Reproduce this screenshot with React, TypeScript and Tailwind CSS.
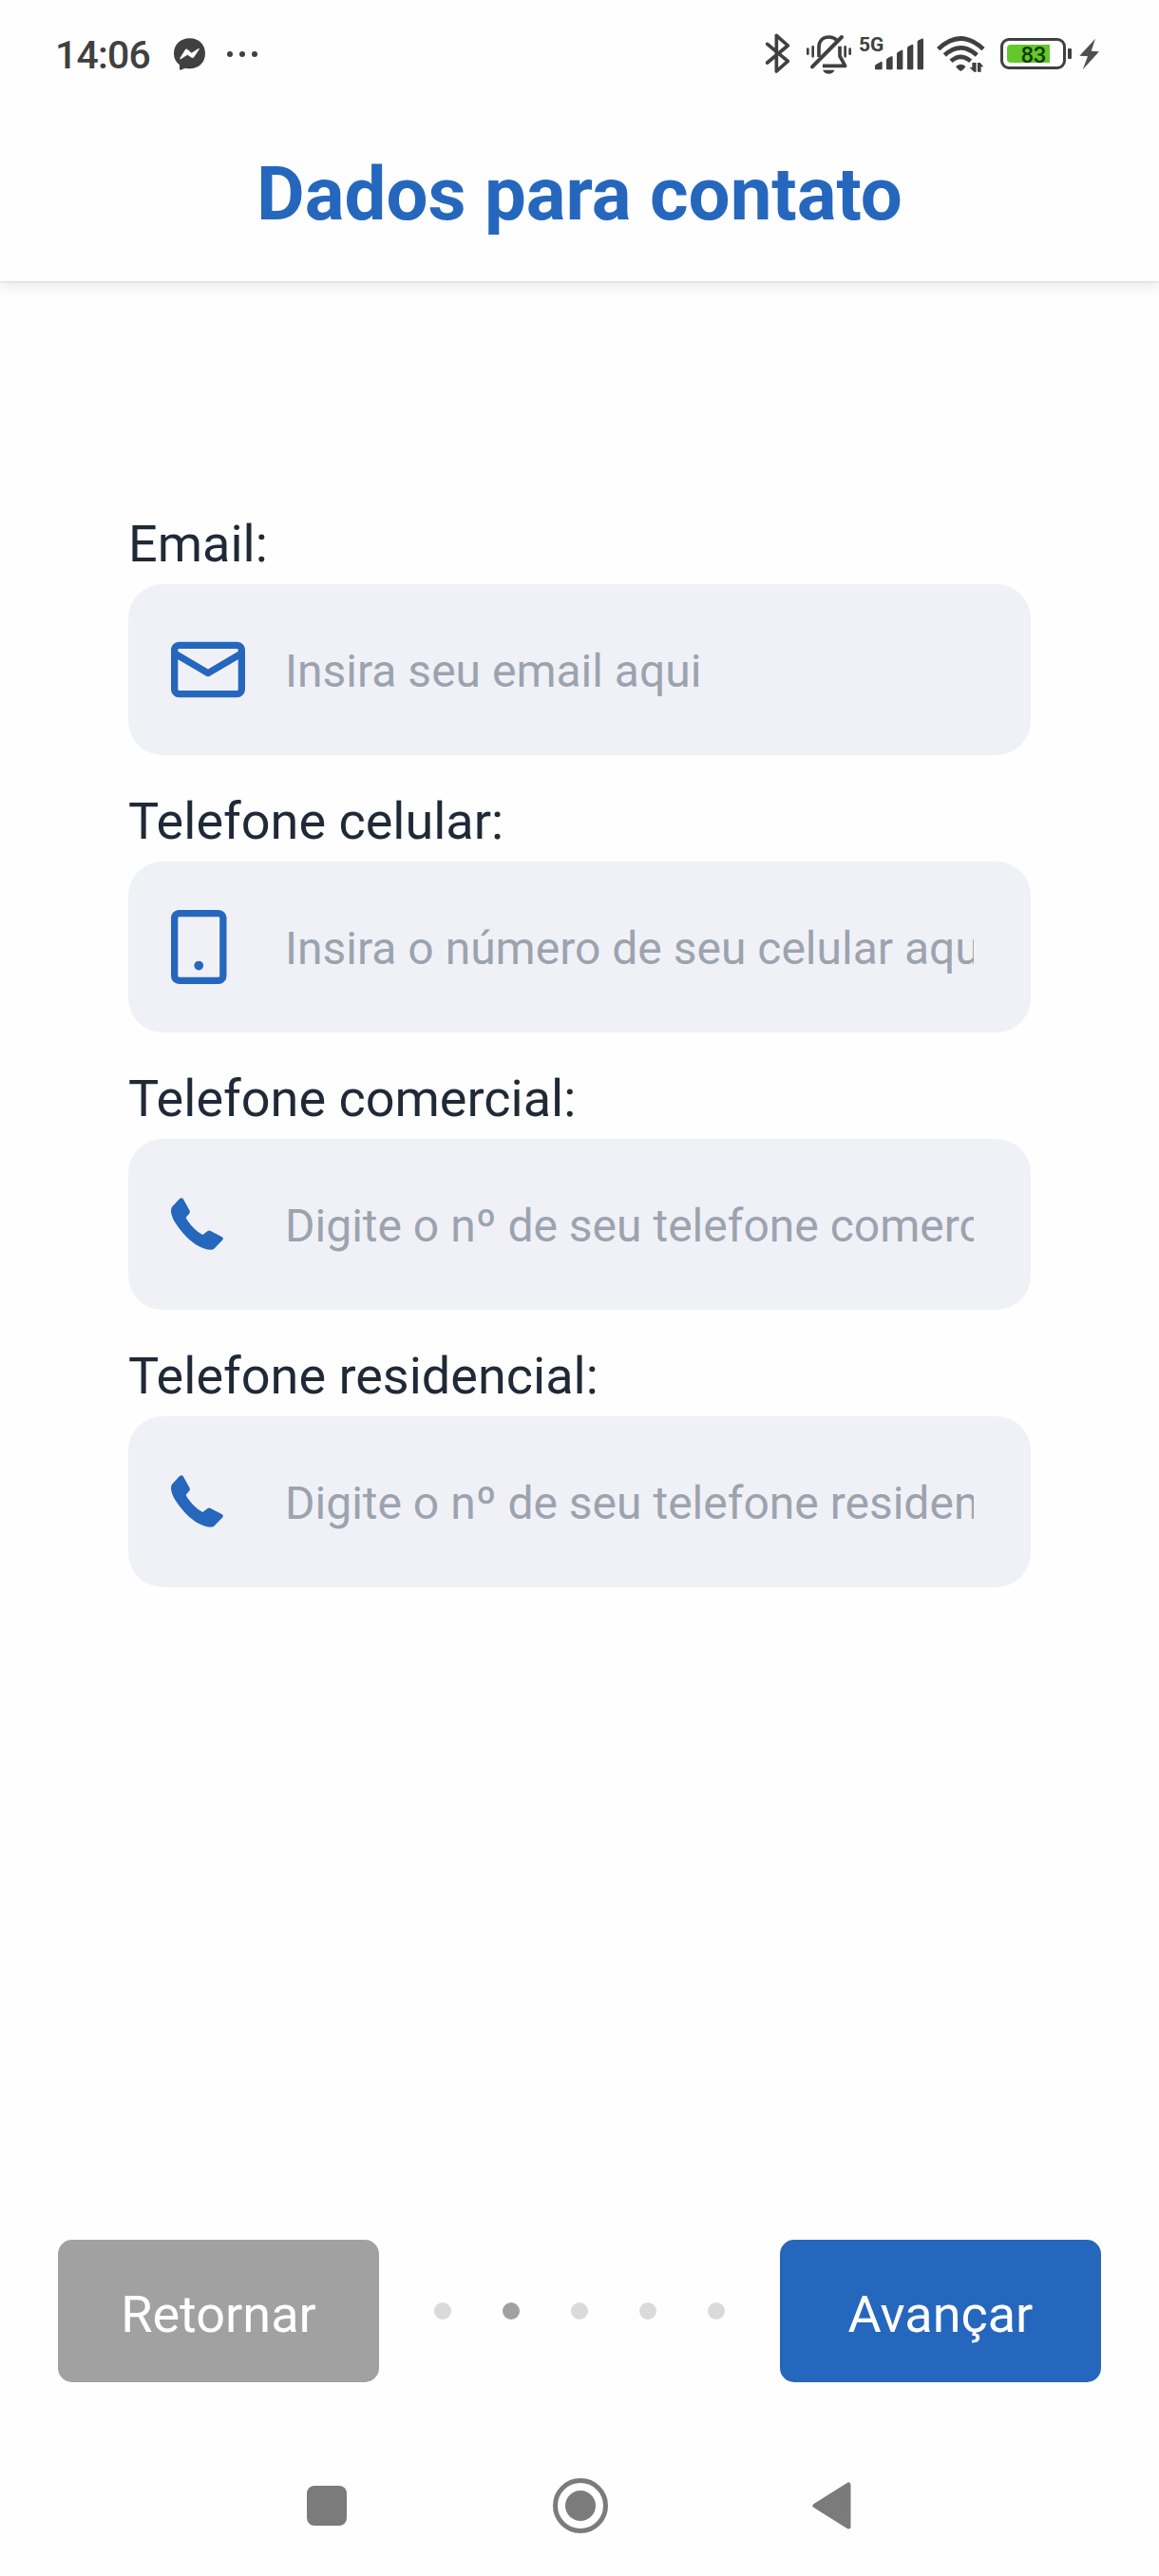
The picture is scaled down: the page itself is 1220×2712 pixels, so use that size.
import type { ReactNode } from "react";

function BluetoothIcon() {
  return (
    <svg viewBox="0 0 195 240" className="h-20 w-[65px]" fill="none" stroke="#404040" strokeWidth="11" strokeLinejoin="round" strokeLinecap="round">
      <path d="M83 79 L148 133 L112 165 V52 L148 84 L83 138" />
    </svg>
  );
}

function BellOffIcon() {
  return (
    <svg viewBox="195 0 165 240" className="h-20 w-[55px]" fill="none" stroke="#404040" strokeLinecap="round">
      <path d="M211 95V110M227 88V118M329 88V118M344 95V110" strokeWidth="8" />
      <path d="M246 120V90C246 68 259 57 278 57C289 57 297 61 303 67" strokeWidth="11" strokeLinecap="butt" />
      <path d="M318 57L225 151" strokeWidth="12" />
      <path d="M312 86V117L329 148H258" strokeWidth="11" strokeLinecap="butt" strokeLinejoin="round" />
      <path d="M258 161H296C292 169 286 173 277 173S262 169 258 161Z" fill="#404040" stroke="none" />
    </svg>
  );
}

function SignalIcon() {
  return (
    <svg viewBox="414 0 180 240" className="-ml-[17px] h-20 w-[60px]" fill="#404040">
      <path d="M426 160Q423 160 423 157V148Q423 145 427 143L442 135Q446 133 446 138V157Q446 160 443 160Z" />
      <path d="M462 160Q459 160 459 157V130Q459 126 463 124L474 118Q479 116 479 121V157Q479 160 476 160Z" />
      <path d="M495 160Q492 160 492 157V110Q492 106 496 104L507 98Q511 96 511 101V157Q511 160 508 160Z" />
      <path d="M528 160Q525 160 525 157V92Q525 88 529 86L539 81Q544 79 544 84V157Q544 160 541 160Z" />
      <path d="M560 160Q557 160 557 157V73Q557 69 561 67L571 62Q576 60 576 65V157Q576 160 573 160Z" />
    </svg>
  );
}

function WifiIcon() {
  return (
    <svg viewBox="36 0 210 240" className="h-20 w-[70px]" fill="none" stroke="#404040">
      <path d="M53 95Q124 28 195 95" strokeWidth="14" />
      <path d="M73 114Q124 68 175 114" strokeWidth="14" />
      <path d="M93 133Q124 106 155 133" strokeWidth="14" />
      <path d="M109 149Q124 138 139 149Q139 154 124 165Q109 154 109 149Z" fill="#404040" stroke="none" />
      <path d="M152 153H160V138H173V167H166ZM177 167V138H185L196 151H188V167Z" fill="#404040" stroke="none" />
    </svg>
  );
}

function BoltIcon() {
  return (
    <svg viewBox="495 0 69 240" className="ml-[7px] h-20 w-[23px]" fill="#505050">
      <path d="M549 62L499 116L525 118L509 160L561 103L536 101Z" />
    </svg>
  );
}

function MessengerIcon() {
  return (
    <svg viewBox="546 117 105 108" className="ml-[23px] h-9 w-[35px]">
      <path d="M599 121C628 121 648 141 648 169S628 217 599 217Q592 217 586 215Q577 218 571 221Q567 222 567 217V205Q549 192 549 169C549 141 570 121 599 121Z" fill="#404040" />
      <path d="M568 184L585 157Q588 153 592 156L605 167L627 153Q630 152 629 156L613 180Q609 185 605 182L592 173L571 187Q568 188 568 184Z" fill="#fefefe" />
    </svg>
  );
}

function StatusBar() {
  return (
    <div className="flex h-[100px] items-start justify-between pt-5">
      <div className="flex h-20 items-center pb-[6px] pl-[58px] text-[#404040]">
        <span className="w-[101px] pt-[3px] text-[41px] leading-none font-medium tracking-[-0.8px]">14:06</span>
        <MessengerIcon />
        <span className="ml-[22px] flex gap-[7px]">
          <i className="size-[6px] rounded-full bg-[#404040]" />
          <i className="size-[6px] rounded-full bg-[#404040]" />
          <i className="size-[6px] rounded-full bg-[#404040]" />
        </span>
      </div>
      <div className="flex h-20 w-[440px] items-start text-[#404040]">
        <BluetoothIcon />
        <BellOffIcon />
        <span className="mt-[15px] ml-1 w-[31px] text-[21px] leading-[24px] font-bold">5G</span>
        <SignalIcon />
        <span className="w-1" />
        <WifiIcon />
        <span className="mt-5 ml-[1px] flex h-[33px] w-[69px] items-center rounded-[9px] border-[3px] border-[#404040] pl-1">
          <span className="flex h-[19px] w-[45px] items-center justify-end rounded-l-[4px] bg-[#64c82d] pt-[2px] pr-1 text-[24px] leading-none font-medium tracking-[-0.4px] text-[#123d06]">
            83
          </span>
        </span>
        <span className="mt-[31px] ml-[2px] h-[11px] w-1 rounded-[1px] bg-[#404040]" />
        <BoltIcon />
      </div>
    </div>
  );
}

function MailIcon() {
  return (
    <svg viewBox="0 0 16 16" className="size-[78px]" fill="#2667be">
      <path d="M1.75 2h12.5c.966 0 1.75.784 1.75 1.75v8.5A1.75 1.75 0 0 1 14.25 14H1.75A1.75 1.75 0 0 1 0 12.25v-8.5C0 2.784.784 2 1.75 2ZM1.5 12.251c0 .138.112.25.25.25h12.5a.25.25 0 0 0 .25-.25V5.809L8.38 9.397a.75.75 0 0 1-.76 0L1.5 5.809v6.442Zm13-8.181v-.32a.25.25 0 0 0-.25-.25H1.75a.25.25 0 0 0-.25.25v.32L8 7.88Z" />
    </svg>
  );
}

function MobileIcon() {
  return (
    <svg viewBox="2 0 12 16" className="h-[78px] w-[58.5px]" fill="#2667be">
      <path d="M3.75 0h8.5C13.216 0 14 .784 14 1.75v12.5A1.75 1.75 0 0 1 12.25 16h-8.5A1.75 1.75 0 0 1 2 14.25V1.75C2 .784 2.784 0 3.75 0ZM3.5 1.75v12.5c0 .138.112.25.25.25h8.5a.25.25 0 0 0 .25-.25V1.75a.25.25 0 0 0-.25-.25h-8.5a.25.25 0 0 0-.25.25ZM8 13a1 1 0 1 1 0-2 1 1 0 0 1 0 2Z" />
    </svg>
  );
}

function PhoneIcon() {
  return (
    <svg viewBox="0 0 55 55" className="mb-[1px] size-[55px]" fill="#2667be">
      <path d="M8.8 1.2Q11.5-1 13 1.5L19.6 13.5Q20.3 15 19.3 16.5L15.7 20.7Q17 24.500 24 32Q29 37 33.300 39L38.300 35.200Q40 34 41.700 34.900L53.800 41.300Q55.600 42.500 54.300 44.600L45.800 53.300Q44 55 41.300 54.800C31 54 20.500 46.500 12.500 37C4.500 27.500 0 20 0 13.500Q0 11 1.200 9.500Z" />
    </svg>
  );
}

function Field({ label, placeholder, icon }: { label: string; placeholder: string; icon: ReactNode }) {
  return (
    <label className="block">
      <span className="block h-[76px] pt-[2px] text-[54px] leading-[64px] text-[#1f2937]">{label}</span>
      <span className="flex h-[180px] items-center rounded-[36px] bg-[#f0f1f7] pl-[45px]">
        <span className="flex w-[120px] shrink-0 items-center">{icon}</span>
        <input
          placeholder={placeholder}
          className="mt-1 h-[60px] w-[725px] bg-transparent p-0 text-[48px] text-[#1f2937] outline-none placeholder:text-[#9ca3af]"
        />
      </span>
    </label>
  );
}

const steps = [0, 1, 2, 3, 4];
const currentStep = 1;

export default function App() {
  return (
    <div className="flex h-[2712px] w-[1220px] flex-col overflow-hidden bg-[#fefefe] font-[Roboto,sans-serif]">
      <header className="h-[296px] bg-[#fefefe] shadow-[0_1px_2px_rgba(0,0,0,0.09),0_5px_14px_rgba(0,0,0,0.09)]">
        <StatusBar />
        <h1 className="pt-[59px] text-center text-[78px] leading-[92px] font-bold text-[#2667be]">Dados para contato</h1>
      </header>

      <main className="mt-[243px] flex flex-col gap-9 px-[135px]">
        <Field label="Email:" placeholder="Insira seu email aqui" icon={<MailIcon />} />
        <Field label="Telefone celular:" placeholder="Insira o número de seu celular aqui" icon={<MobileIcon />} />
        <Field label="Telefone comercial:" placeholder="Digite o nº de seu telefone comercial" icon={<PhoneIcon />} />
        <Field label="Telefone residencial:" placeholder="Digite o nº de seu telefone residencial" icon={<PhoneIcon />} />
      </main>

      <footer className="mt-auto">
        <div className="flex items-center justify-between px-[61px]">
          <button className="h-[150px] w-[338px] rounded-[15px] bg-[#a1a1a1] pt-[6px] text-[54px] text-white">Retornar</button>
          <div className="flex gap-[54px]">
            {steps.map((step) => (
              <span
                key={step}
                className={step === currentStep ? "size-[18px] rounded-full bg-[#a1a1a1]" : "size-[18px] rounded-full bg-[#dadada]"}
              />
            ))}
          </div>
          <button className="h-[150px] w-[338px] rounded-[15px] bg-[#2667be] pt-[6px] text-[54px] text-white">Avançar</button>
        </div>
        <nav className="mt-[100px] flex h-[104px] items-start justify-between pr-[324px] pl-[323px]">
          <span className="mt-[9px] size-[42px] rounded-[8px] bg-[#7b7b7b]" />
          <span className="mt-[1px] ml-[1px] flex size-[58px] items-center justify-center rounded-full border-[5px] border-[#7b7b7b]">
            <span className="size-8 rounded-full bg-[#7b7b7b]" />
          </span>
          <svg viewBox="0 0 41 50" className="mt-[5px] h-[50px] w-[41px]" fill="#7b7b7b" stroke="#7b7b7b" strokeWidth="5" strokeLinejoin="round">
            <path d="M3 25L38 3V47Z" />
          </svg>
        </nav>
      </footer>
    </div>
  );
}
